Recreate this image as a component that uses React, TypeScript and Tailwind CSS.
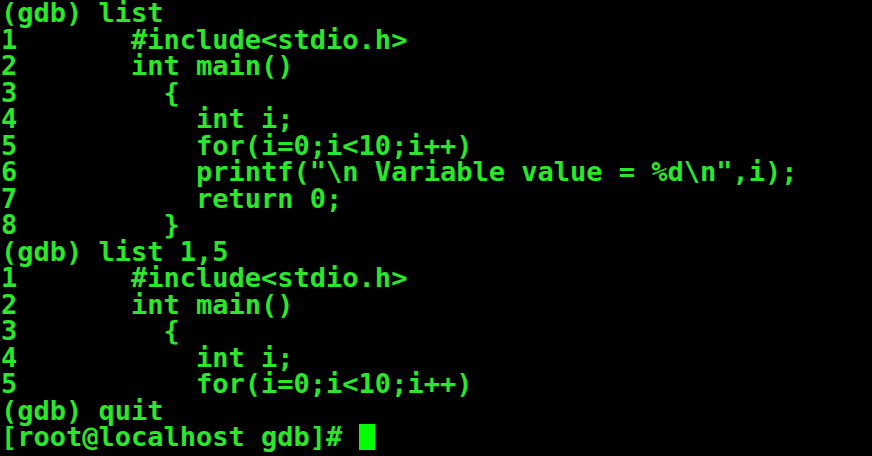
import React from "react";

const lines = [
  "(gdb) list",
  "1       #include<stdio.h>",
  "2       int main()",
  "3         {",
  "4           int i;",
  "5           for(i=0;i<10;i++)",
  '6           printf("\\n Variable value = %d\\n",i);',
  "7           return 0;",
  "8         }",
  "(gdb) list 1,5",
  "1       #include<stdio.h>",
  "2       int main()",
  "3         {",
  "4           int i;",
  "5           for(i=0;i<10;i++)",
  "(gdb) quit",
];

export default function App() {
  return (
    <div
      className="w-[872px] h-[456px] bg-black overflow-hidden pl-[1px] text-[27px] leading-[26.5px] font-bold text-[#2be62b] whitespace-pre"
      style={{ fontFamily: '"DejaVu Sans Mono", monospace' }}
    >
      {lines.map((l, i) => (
        <div key={i}>{l}</div>
      ))}
      <div className="flex items-center">
        <span>{"[root@localhost gdb]# "}</span>
        <span className="inline-block w-[16px] h-[26px] bg-[#00ff00]" />
      </div>
    </div>
  );
}
